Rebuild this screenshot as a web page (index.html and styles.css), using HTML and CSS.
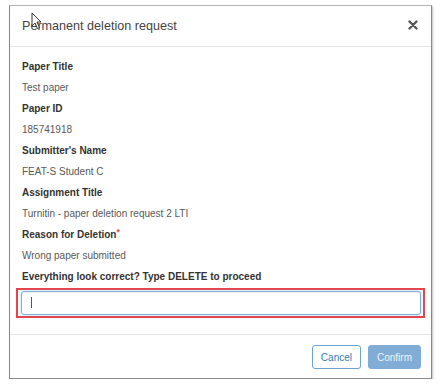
FILE: index.html
```html
<!DOCTYPE html>
<html lang="en">
  <head>
    <meta charset="UTF-8" />
    <title>Permanent deletion request</title>
    <link rel="stylesheet" href="styles.css">
  </head>
  <body>
    <div class="modal">
      <div class="modal-header">
        <h4 class="modal-title">Permanent deletion request</h4>
        <button class="close" aria-label="Close">
          <svg width="10" height="10" viewBox="0 0 10 10"><path d="M1.5 1.5 L8.5 8.5 M8.5 1.5 L1.5 8.5" stroke="#555" stroke-width="2.4" stroke-linecap="round"/></svg>
        </button>
      </div>

      <div class="modal-body">
        <div class="label">Paper Title</div>
        <div class="value">Test paper</div>
        <div class="label">Paper ID</div>
        <div class="value">185741918</div>
        <div class="label">Submitter's Name</div>
        <div class="value">FEAT-S Student C</div>
        <div class="label">Assignment Title</div>
        <div class="value">Turnitin - paper deletion request 2 LTI</div>
        <div class="label">Reason for Deletion<span class="req">*</span></div>
        <div class="value">Wrong paper submitted</div>
        <div class="label">Everything look correct? Type DELETE to proceed</div>
        <div class="input-wrap">
          <input type="text" class="confirm-input" />
          <span class="caret"></span>
        </div>
      </div>

      <div class="modal-footer">
        <button class="btn btn-default">Cancel</button>
        <button class="btn btn-primary" disabled>Confirm</button>
      </div>

      <svg class="pointer" width="12" height="18" viewBox="0 0 12 18"><path d="M1 1 L1 14 L4 11 L6.5 16.5 L8.5 15.5 L6 10 L10 10 Z" fill="#fff" stroke="#333" stroke-width="1" stroke-linejoin="round"/></svg>
    </div>
  </body>
</html>
```

FILE: styles.css
```css
body {
  margin: 0;
  background: #fff;
  font-family: "Liberation Sans", Arial, sans-serif;
  font-size: 10px;
}
.modal {
  position: relative;
  width: 421px;
  height: 372px;
  margin: 5px 0 0 9px;
  border: 1px solid #8a8a8a;
  border-top-color: #b5b5b5;
  box-shadow: 1px 1px 2px rgba(0, 0, 0, 0.25);
  display: flex;
  flex-direction: column;
}
.modal-header {
  display: flex;
  align-items: center;
  justify-content: space-between;
  height: 40px;
  padding: 0 13px 0 12px;
  border-bottom: 1px solid #e5e5e5;
}
.modal-title {
  margin: 0;
  font-size: 12.6px;
  font-weight: normal;
  color: #444;
}
.close {
  border: 0;
  background: none;
  padding: 0;
  display: flex;
  margin-top: -2px;
}
.modal-body {
  flex: 1;
  padding: 9px 11px 0 11px;
}
.label,
.value {
  line-height: 21px;
  padding-left: 1px;
}
.label {
  font-weight: bold;
  color: #333;
}
.value {
  color: #595959;
}
.req {
  color: #d9534f;
  font-size: 9px;
  vertical-align: top;
  line-height: 17px;
}
.input-wrap {
  position: relative;
  margin: 1px 0 0 -5px;
  width: 400px;
  padding: 1px 2px 1px 3px;
  border: 2px solid #e8424a;
}
.confirm-input {
  display: block;
  box-sizing: border-box;
  width: 400px;
  height: 24px;
  margin: 0;
  border: 1px solid #7fb1dc;
  border-radius: 3px;
  box-shadow: inset 0 1px 1px rgba(0, 0, 0, 0.075), 0 0 3px rgba(102, 175, 233, 0.6);
  outline: none;
}
.caret {
  position: absolute;
  left: 13px;
  top: 7px;
  width: 1px;
  height: 11px;
  background: #555;
}
.modal-footer {
  display: flex;
  justify-content: flex-end;
  gap: 7px;
  padding: 10px 10px 9px;
  border-top: 1px solid #e5e5e5;
}
.btn {
  height: 24px;
  padding: 0 8px;
  border-radius: 3px;
  font-family: "Liberation Sans", Arial, sans-serif;
  font-size: 10px;
}
.btn-default {
  background: #fff;
  border: 1px solid #6aa3d8;
  color: #337ab7;
}
.btn-primary {
  background: #80acd5;
  border: 1px solid #80acd5;
  color: #eef4fa;
}
.pointer {
  position: absolute;
  left: 21px;
  top: 6px;
}
```
